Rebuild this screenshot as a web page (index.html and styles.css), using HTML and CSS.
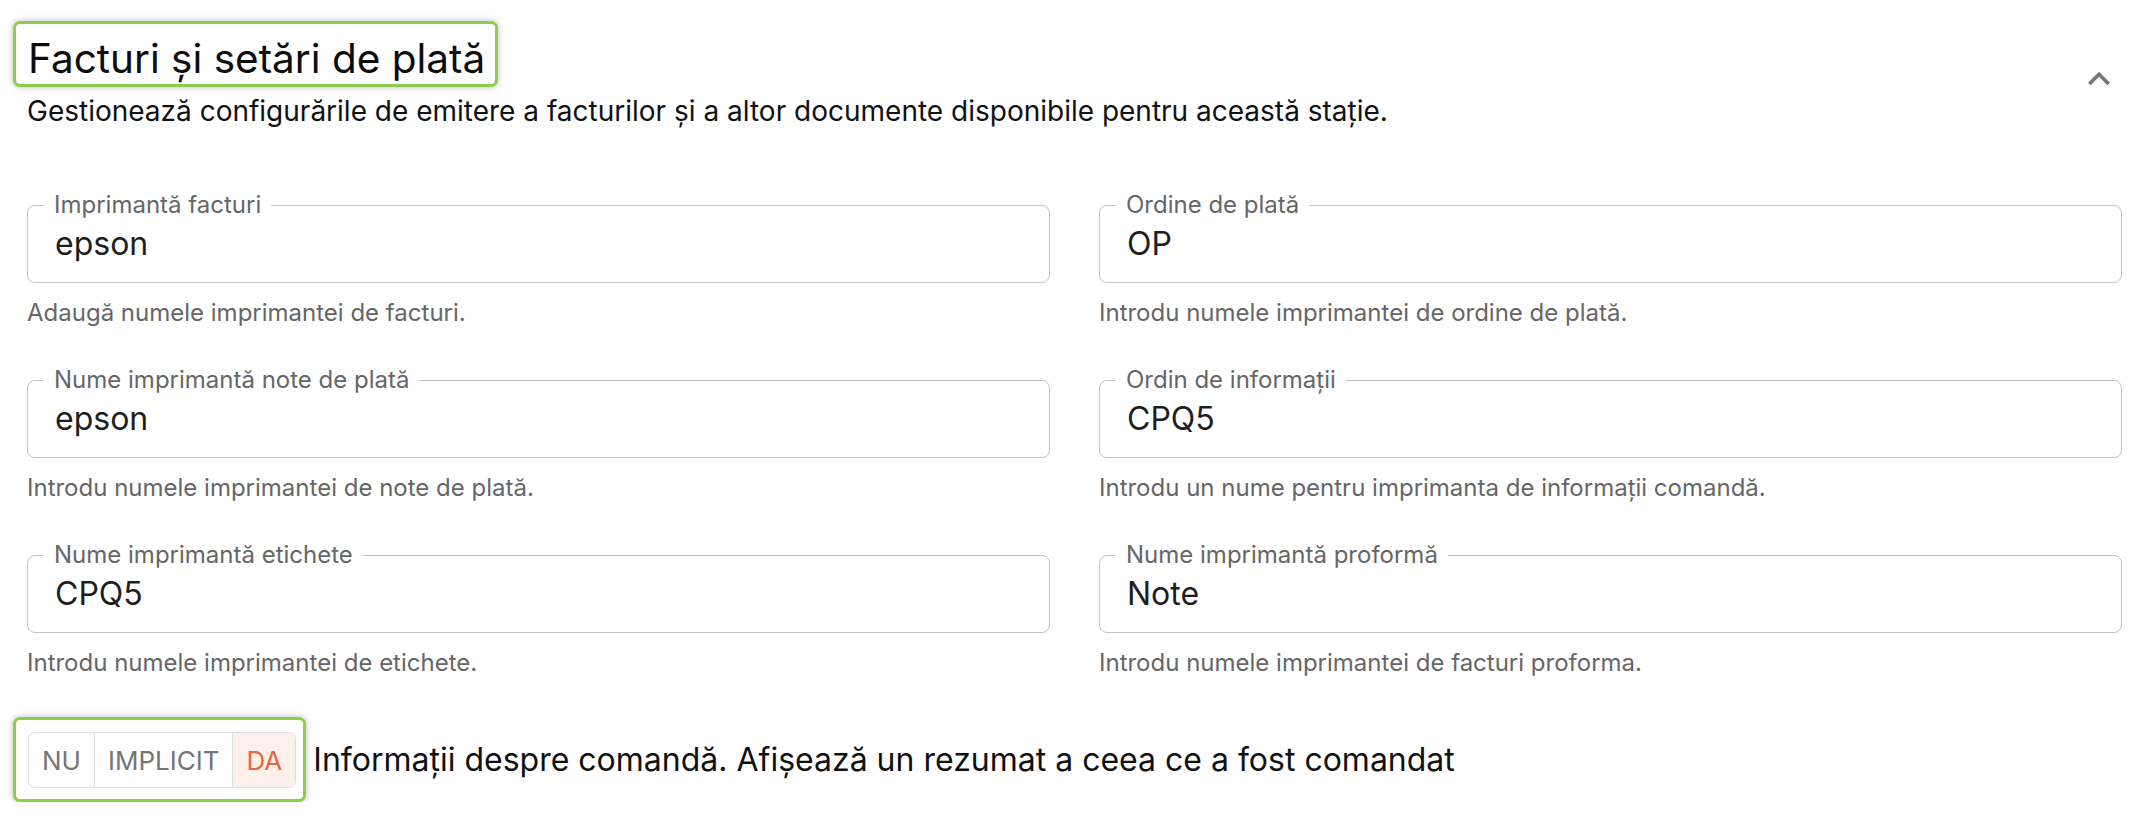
FILE: index.html
```html
<!DOCTYPE html>
<html lang="ro">
<head>
<meta charset="utf-8">
<title>Facturi și setări de plată</title>
<link rel="stylesheet" href="styles.css">
</head>
<body>
<section class="section">
  <header class="header">
    <div class="header-text">
      <div class="hl-box title-box"><h1 class="title">Facturi și setări de plată</h1></div>
      <p class="subtitle">Gestionează configurările de emitere a facturilor și a altor documente disponibile pentru această stație.</p>
    </div>
    <button class="collapse-btn" aria-label="Restrânge">
      <svg viewBox="0 0 24 24" width="44" height="44"><path d="M12 8l-6 6 1.41 1.41L12 10.83l4.59 4.58L18 14z" fill="#757575"/></svg>
    </button>
  </header>

  <div class="fields">
    <div class="field-group">
      <div class="field"><span class="field-label">Imprimantă facturi</span><span class="field-value">epson</span></div>
      <p class="helper">Adaugă numele imprimantei de facturi.</p>
    </div>
    <div class="field-group">
      <div class="field"><span class="field-label">Ordine de plată</span><span class="field-value">OP</span></div>
      <p class="helper">Introdu numele imprimantei de ordine de plată.</p>
    </div>
    <div class="field-group">
      <div class="field"><span class="field-label">Nume imprimantă note de plată</span><span class="field-value">epson</span></div>
      <p class="helper">Introdu numele imprimantei de note de plată.</p>
    </div>
    <div class="field-group">
      <div class="field"><span class="field-label">Ordin de informații</span><span class="field-value">CPQ5</span></div>
      <p class="helper">Introdu un nume pentru imprimanta de informații comandă.</p>
    </div>
    <div class="field-group">
      <div class="field"><span class="field-label">Nume imprimantă etichete</span><span class="field-value">CPQ5</span></div>
      <p class="helper">Introdu numele imprimantei de etichete.</p>
    </div>
    <div class="field-group">
      <div class="field"><span class="field-label">Nume imprimantă proformă</span><span class="field-value">Note</span></div>
      <p class="helper">Introdu numele imprimantei de facturi proforma.</p>
    </div>
  </div>

  <div class="toggle-row">
    <div class="hl-box toggle-box">
      <div class="toggle-group">
        <span class="toggle">NU</span>
        <span class="toggle">IMPLICIT</span>
        <span class="toggle toggle-active">DA</span>
      </div>
    </div>
    <span class="toggle-text">Informații despre comandă. Afișează un rezumat a ceea ce a fost comandat</span>
  </div>
</section>
</body>
</html>
```

FILE: styles.css
```css
* { box-sizing: border-box; }

html, body {
  margin: 0;
  padding: 0;
  background: #ffffff;
}

body {
  font-family: "Inter", "Liberation Sans", sans-serif;
  color: #111111;
}

.section {
  padding: 0 26px 0 27px;
}

.header {
  display: flex;
  justify-content: space-between;
  align-items: flex-start;
}

.hl-box {
  border: 3px solid #8fcd4f;
  border-radius: 7px;
  box-shadow: 0 0 6px rgba(0, 0, 0, 0.28);
  background: #ffffff;
}

.title-box {
  display: inline-block;
  margin: 21px 0 0 -14px;
  padding: 11px 10px 1px 12px;
}

.title {
  margin: 0;
  font-size: 40.5px;
  line-height: 48px;
  font-weight: 400;
  color: #0d0d0d;
}

.subtitle {
  margin: 3px 0 0 0;
  font-size: 28px;
  line-height: 42px;
  color: #111111;
}

.collapse-btn {
  margin: 57px 1px 0 0;
  padding: 0;
  border: 0;
  background: transparent;
  width: 44px;
  height: 44px;
  display: flex;
}

.fields {
  margin-top: 73px;
  display: grid;
  grid-template-columns: 1fr 1fr;
  column-gap: 49px;
  row-gap: 50px;
}

.field {
  position: relative;
  height: 78px;
  border: 1px solid #c4c4c4;
  border-radius: 8px;
  padding: 0 27px;
  display: flex;
  align-items: center;
}

.field-label {
  position: absolute;
  top: -15px;
  left: 16px;
  padding: 0 10px;
  background: #ffffff;
  font-size: 24px;
  line-height: 28px;
  color: #666666;
}

.field-value {
  font-size: 32px;
  line-height: 40px;
  color: #1e1e1e;
}

.helper {
  margin: 13px 0 0 0;
  font-size: 24px;
  line-height: 34px;
  color: #666666;
}

.toggle-row {
  margin-top: 37px;
  display: flex;
  align-items: center;
}

.toggle-box {
  margin-left: -14px;
  padding: 12px 7px 11px 12px;
}

.toggle-group {
  display: flex;
  border: 1px solid #dcdcdc;
  border-radius: 7px;
  overflow: hidden;
  height: 56px;
}

.toggle {
  display: flex;
  align-items: center;
  padding: 0 13px;
  font-size: 26px;
  color: #757575;
  border-left: 1px solid #dcdcdc;
}

.toggle:first-child {
  border-left: 0;
}

.toggle-active {
  background: #fdf0ec;
  color: #e8673f;
}

.toggle-text {
  margin-left: 7px;
  font-size: 32px;
  color: #111111;
}
```
